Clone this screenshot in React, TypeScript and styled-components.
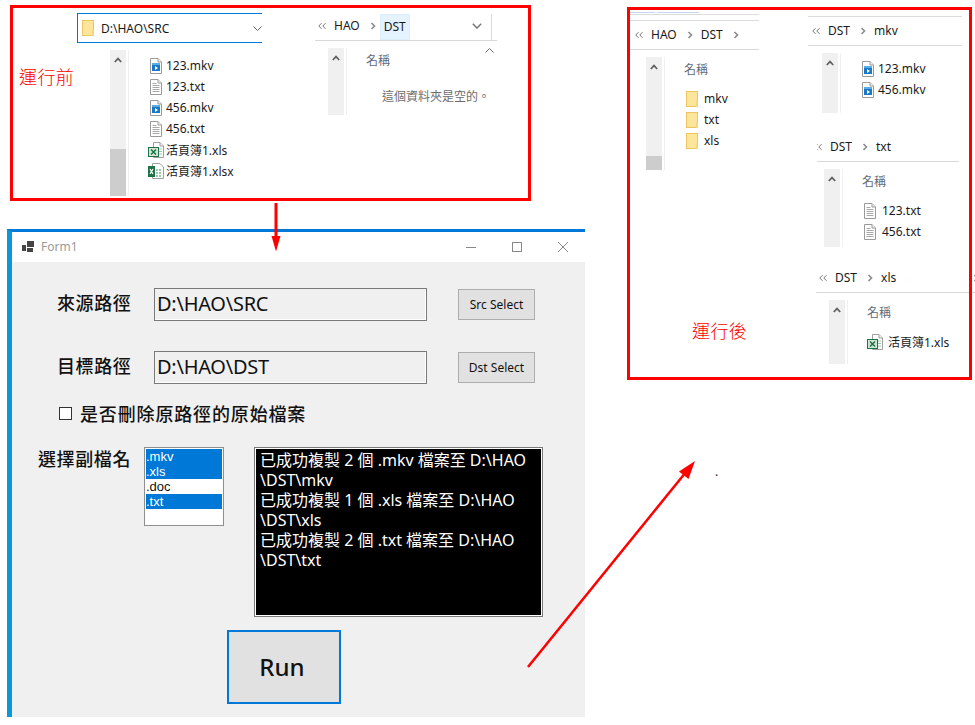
import React from "react";
import styled, { createGlobalStyle } from "styled-components";

const Global = createGlobalStyle`
  html, body { margin: 0; padding: 0; background: #fff; }
  body { font-family: "Noto Sans", "Noto Sans CJK TC", sans-serif; color: #1a1a1a; }
`;

const Canvas = styled.div`
  position: relative;
  width: 975px;
  height: 725px;
  overflow: hidden;
  background: #fff;
`;

const RedFrame = styled.div<{ $x: number; $y: number; $w: number; $h: number }>`
  position: absolute;
  left: ${(p) => p.$x}px;
  top: ${(p) => p.$y}px;
  width: ${(p) => p.$w}px;
  height: ${(p) => p.$h}px;
  box-sizing: border-box;
  border: 3px solid #fe0000;
  z-index: 3;
  pointer-events: none;
`;

const Note = styled.div<{ $x: number; $y: number }>`
  position: absolute;
  left: ${(p) => p.$x}px;
  top: ${(p) => p.$y}px;
  font-size: 18px;
  line-height: 24px;
  font-weight: 300;
  letter-spacing: 0.4px;
  color: #fe0000;
  white-space: nowrap;
`;

const Dot = styled.div`
  position: absolute;
  left: 715px;
  top: 464px;
  font-size: 12px;
  line-height: 16px;
  color: #222;
`;

const ArrowLayer = styled.svg`
  position: absolute;
  left: 0;
  top: 0;
  z-index: 4;
  pointer-events: none;
`;

const Explorer = styled.section<{ $x: number; $y: number; $w: number }>`
  position: absolute;
  left: ${(p) => p.$x}px;
  top: ${(p) => p.$y}px;
  width: ${(p) => p.$w}px;
`;

const TopRule = styled.div`
  height: 1px;
  background: #dcdcdc;
`;

const OldTabs = styled.div`
  position: absolute;
  left: 0;
  top: -8px;
  display: flex;
  flex-direction: column;
  width: 129px;
`;

const OldTabBits = styled.div`
  display: flex;
  gap: 2px;
  height: 1px;
  margin-bottom: 1px;
  & > i { display: block; height: 1px; background: #c6d6ee; }
  & > i:first-child { width: 25px; }
  & > i:last-child { width: 42px; }
`;

const Crumbs = styled.div<{ $pad: number; $clip?: boolean }>`
  display: flex;
  align-items: center;
  gap: 8px;
  height: 28px;
  padding-left: ${(p) => p.$pad}px;
  border-bottom: 1px solid #d9d9d9;
  font-size: 12px;
  color: #1a1a1a;
  white-space: nowrap;
  overflow: hidden;
  ${(p) => (p.$clip ? "& > svg:first-child { margin-left: -3px; }" : "")}
`;

const CrumbText = styled.span<{ $active?: boolean }>`
  display: flex;
  align-items: center;
  align-self: flex-end;
  height: 26px;
  line-height: 26px;
  ${(p) =>
    p.$active
      ? "background:#e5f3ff; padding:0 4px; margin:0 -4px; box-shadow: inset 0 0 0 1px #ddeefc;"
      : "margin-bottom:1px;"}
`;

const ChevWrap = styled.span`
  display: flex;
  margin-left: 2px;
`;

const CrumbEnd = styled.div<{ $left: number }>`
  display: flex;
  align-items: center;
  align-self: stretch;
  margin-left: ${(p) => p.$left}px;
`;

const CrumbTail = styled.span`
  display: flex;
  margin-left: auto;
  margin-right: -4px;
`;

const VRule = styled.div`
  width: 1px;
  height: 26px;
  align-self: flex-end;
  background: #d9d9d9;
  margin-left: 9px;
`;

const Combo = styled.div`
  display: flex;
  align-items: center;
  height: 28px;
  padding-left: 4px;
  border: 1px solid #0078d7;
  border-right: none;
  font-size: 12px;
  gap: 7px;
`;

const ComboValue = styled.span`
  flex: 1;
`;

const SortCaret = styled.svg`
  position: absolute;
  left: 170px;
  top: 36px;
`;

const Pane = styled.div<{ $indent: number }>`
  display: flex;
  margin-left: ${(p) => p.$indent}px;
  margin-top: 7px;
`;

const Scroll = styled.div<{ $h: number }>`
  display: flex;
  flex-direction: column;
  justify-content: space-between;
  align-items: center;
  width: 16px;
  height: ${(p) => p.$h}px;
  background: #f0f0f0;
`;

const ScrollArrow = styled.svg`
  margin-top: 7px;
  flex: none;
`;

const Thumb = styled.div<{ $h: number }>`
  width: 100%;
  height: ${(p) => p.$h}px;
  background: #cdcdcd;
`;

const PaneLine = styled.div`
  width: 1px;
  margin-left: 2px;
  background: #f0f0f0;
`;

const Column = styled.div`
  display: flex;
  flex-direction: column;
  padding-left: 19px;
  padding-top: 5px;
`;

const Header = styled.div`
  height: 24px;
  margin-top: -4px;
  margin-bottom: 6px;
  line-height: 24px;
  font-size: 12px;
  color: #5f6b7a;
  white-space: nowrap;
`;

const Empty = styled.div`
  margin-left: 16px;
  margin-top: 7px;
  line-height: 22px;
  font-size: 12px;
  color: #6d6d6d;
  white-space: nowrap;
`;

const Row = styled.div<{ $gap: number }>`
  display: flex;
  align-items: center;
  gap: ${(p) => p.$gap}px;
  height: 21px;
  font-size: 12px;
  color: #1a1a1a;
  white-space: nowrap;
`;

const IconBox = styled.span`
  display: flex;
  justify-content: center;
  width: 16px;
  flex: none;
`;

/* ---------- drawn icons ---------- */
const Chev = () => (
  <ChevWrap>
    <svg width="6" height="8" viewBox="0 0 6 8" fill="none">
      <path d="M1.500 1 4.500 4 1.500 7" stroke="#8a8a8a" strokeWidth="1.600" />
    </svg>
  </ChevWrap>
);
const Back = () => (
  <svg width="8" height="8" viewBox="0 0 8 8" fill="none">
    <path d="M3.500 1.200.8 4l2.700 2.800M7.500 1.200 4.800 4l2.700 2.800" stroke="#777" strokeWidth="1" />
  </svg>
);
const Down = () => (
  <svg width="10" height="6" viewBox="0 0 10 6" fill="none">
    <path d="M.8.8 5 5 9.200.8" stroke="#777" strokeWidth="1.500" />
  </svg>
);
const ThinDown = () => (
  <svg width="9" height="5" viewBox="0 0 9 5" fill="none">
    <path d="M.5.5 4.500 4.500 8.500.5" stroke="#666" strokeWidth="1" />
  </svg>
);
const Up = () => (
  <ScrollArrow width="8" height="6" viewBox="0 0 8 6" fill="none">
    <path d="M.8 5 4 1.600 7.200 5" stroke="#606060" strokeWidth="1.700" />
  </ScrollArrow>
);
const Page = ({ children }: { children?: React.ReactNode }) => (
  <svg width="12" height="16" viewBox="0 0 12 16">
    <path d="M.5.5h7.500l3.500 3.500v11.500H.5z" fill="#fff" stroke="#9a9a9a" />
    <path d="M8 .5V4h3.500" fill="#f2f2f2" stroke="#9a9a9a" />
    {children}
  </svg>
);
const TxtIcon = () => (
  <Page>
    <path d="M2.500 4.500h4M2.500 6.500h7M2.500 8.500h7M2.500 10.500h7M2.500 12.500h7" stroke="#a8a8a8" />
  </Page>
);
const MkvIcon = () => (
  <Page>
    <rect x="2" y="5" width="8" height="8" fill="#1a78c8" />
    <rect x="2" y="5" width="8" height="2" fill="#5aaee8" />
    <path d="M5 8 8 10 5 12z" fill="#fff" />
  </Page>
);
const XlsIcon = () => (
  <svg width="16" height="16" viewBox="0 0 16 16">
    <path d="M5.500.5h6.500l3.500 3.500v11.500H5.500z" fill="#fff" stroke="#a0a0a0" />
    <path d="M12 .5V4h3.500" fill="#f2f2f2" stroke="#a0a0a0" />
    <path d="M11 7h3M11 9.500h3M11 12h3" stroke="#9cc5ac" />
    <rect x=".5" y="5.500" width="10" height="9" fill="#cfe6d7" stroke="#1f7245" />
    <path d="M3 7.500 8 12.500M8 7.500 3 12.500" stroke="#1f7245" strokeWidth="1.500" />
  </svg>
);
const XlsxIcon = () => (
  <svg width="16" height="16" viewBox="0 0 16 16">
    <path d="M4.500.5h7.500l3.500 3.500v11.500h-11z" fill="#fff" stroke="#a0a0a0" />
    <path d="M8 6h2v2H8zM11 6h2v2h-2zM8 9h2v2H8zM11 9h2v2h-2zM8 12h2v2H8zM11 12h2v2h-2z" fill="#9cc5ac" />
    <rect x="0" y="3" width="7" height="11" fill="#1f7245" />
    <path d="M2 6l3 5M5 6l-3 5" stroke="#fff" strokeWidth="1.200" />
  </svg>
);
const FolderIcon = () => (
  <svg width="12" height="16" viewBox="0 0 12 16">
    <rect x=".5" y=".5" width="11" height="15" fill="#fde69c" stroke="#eac560" />
    <rect x="10" y="10" width="2" height="6" fill="#f5d67c" />
  </svg>
);

type Kind = "mkv" | "txt" | "xls" | "xlsx" | "folder";
const icons: Record<Kind, React.FC> = {
  mkv: MkvIcon,
  txt: TxtIcon,
  xls: XlsIcon,
  xlsx: XlsxIcon,
  folder: FolderIcon,
};

const FileRow = ({ kind, name, gap }: { kind: Kind; name: string; gap: number }) => {
  const I = icons[kind];
  return (
    <Row $gap={gap}>
      <IconBox>
        <I />
      </IconBox>
      {name}
    </Row>
  );
};

const Trail = ({
  parts,
  pad,
  clip,
  trailing,
  tail,
}: {
  parts: string[];
  pad: number;
  clip?: boolean;
  trailing?: boolean;
  tail?: boolean;
}) => (
  <Crumbs $pad={pad} $clip={clip}>
    <Back />
    {parts.map((p, i) => (
      <React.Fragment key={p}>
        {i > 0 && <Chev />}
        <CrumbText>{p}</CrumbText>
      </React.Fragment>
    ))}
    {trailing && <Chev />}
    {tail && (
      <CrumbTail>
        <Chev />
      </CrumbTail>
    )}
  </Crumbs>
);

/* ---------- the form ---------- */
const Form = styled.section`
  position: absolute;
  left: 7px;
  top: 229px;
  width: 578px;
  height: 488px;
  box-sizing: border-box;
  display: flex;
  flex-direction: column;
  border-top: 3px solid #0078d7;
  border-left: 5px solid #0a98da;
  background: #f0f0f0;
`;

const TitleBar = styled.header`
  display: flex;
  align-items: center;
  flex: none;
  height: 30px;
  padding-left: 10px;
  background: #fff;
`;

const TitleText = styled.span`
  margin-left: 7px;
  margin-bottom: 1px;
  font-size: 12px;
  color: #9a9a9a;
`;

const WinButtons = styled.div`
  display: flex;
  align-items: center;
  gap: 36px;
  margin-left: auto;
  margin-right: 17px;
  margin-top: -1px;
`;

const FormBody = styled.div`
  display: flex;
  flex-direction: column;
  padding: 26px 0 0 45px;
`;

const PathRow = styled.div`
  display: flex;
  align-items: center;
  height: 33px;
  margin-bottom: 30px;
`;

const FieldLabel = styled.label`
  width: 97px;
  flex: none;
  padding-bottom: 3px;
  font-size: 18px;
  font-weight: 500;
  letter-spacing: 0.6px;
  line-height: 24px;
  color: #111;
  white-space: nowrap;
`;

const PathBox = styled.div`
  display: flex;
  align-items: center;
  width: 273px;
  height: 33px;
  box-sizing: border-box;
  padding: 0 0 3px 2px;
  border: 1px solid #7a7a7a;
  box-shadow: inset -1px -1px 0 #fff;
  font-size: 20px;
  letter-spacing: -0.25px;
  color: #111;
`;

const SelectButton = styled.button`
  width: 77px;
  height: 31px;
  margin-left: 31px;
  padding: 0;
  box-sizing: border-box;
  border: 1px solid #adadad;
  background: #e1e1e1;
  font-family: inherit;
  font-size: 12px;
  color: #111;
`;

const CheckRow = styled.div`
  display: flex;
  align-items: center;
  gap: 8px;
  height: 20px;
  margin: -11px 0 0 2px;
  font-size: 18px;
  font-weight: 500;
  letter-spacing: 0.85px;
  color: #111;
  white-space: nowrap;
`;

const CheckBox = styled.span`
  width: 13px;
  height: 13px;
  box-sizing: border-box;
  border: 1px solid #333;
  background: #fff;
  flex: none;
`;

const LowerRow = styled.div`
  display: grid;
  grid-template-columns: 93px 80px 289px;
  column-gap: 0;
  margin: 24px 0 0 -19px;
`;

const LowerLabel = styled(FieldLabel)`
  width: auto;
  padding-bottom: 0;
`;

const ListBox = styled.div`
  margin-left: 13px;
  width: 80px;
  height: 79px;
  box-sizing: border-box;
  padding: 1px;
  border: 1px solid #8e8f8f;
  background: #fff;
  display: flex;
  flex-direction: column;
`;

const ListItem = styled.div<{ $on?: boolean }>`
  height: 15px;
  line-height: 15px;
  font-family: "Liberation Sans", sans-serif;
  font-size: 13px;
  background: ${(p) => (p.$on ? "#0078d7" : "#fff")};
  color: ${(p) => (p.$on ? "#fff" : "#111")};
`;

const Output = styled.div`
  margin-left: 43px;
  width: 289px;
  height: 170px;
  box-sizing: border-box;
  padding: 2px 0 0 5px;
  border: 1px solid #7a7a7a;
  box-shadow: inset 0 0 0 1px #fff;
  background: #000;
  color: #fff;
  font-size: 16px;
  line-height: 20px;
  white-space: nowrap;
`;

const RunRow = styled.div`
  display: flex;
`;

const RunButton = styled.button`
  width: 114px;
  height: 74px;
  margin: 13px 0 0 170px;
  padding: 0 4px 2px 0;
  box-sizing: border-box;
  border: 2px solid #0078d7;
  background: #e1e1e1;
  font-family: inherit;
  font-size: 24px;
  font-weight: 500;
  color: #111;
`;

export default function App() {
  return (
    <Canvas>
      <Global />

      {/* source folder, before */}
      <Explorer $x={77} $y={13} $w={185}>
        <Combo>
          <FolderIcon />
          <ComboValue>D:\HAO\SRC</ComboValue>
          <ThinDown />
        </Combo>
        <Pane $indent={33}>
          <Scroll $h={146}>
            <Up />
            <Thumb $h={47} />
          </Scroll>
          <PaneLine />
          <Column>
            <FileRow kind="mkv" name="123.mkv" gap={2} />
            <FileRow kind="txt" name="123.txt" gap={2} />
            <FileRow kind="mkv" name="456.mkv" gap={2} />
            <FileRow kind="txt" name="456.txt" gap={2} />
            <FileRow kind="xls" name="活頁簿1.xls" gap={2} />
            <FileRow kind="xlsx" name="活頁簿1.xlsx" gap={2} />
          </Column>
        </Pane>
      </Explorer>

      {/* destination folder, before */}
      <Explorer $x={315} $y={12} $w={182}>
        <Crumbs $pad={3}>
          <Back />
          <CrumbText>HAO</CrumbText>
          <Chev />
          <CrumbText $active>DST</CrumbText>
          <CrumbEnd $left={58}>
            <Down />
            <VRule />
          </CrumbEnd>
        </Crumbs>
        <SortCaret width="9" height="5" viewBox="0 0 9 5" fill="none">
          <path d="M.5 4.500 4.500.5 8.500 4.500" stroke="#666" strokeWidth="1" />
        </SortCaret>
        <Pane $indent={13}>
          <Scroll $h={67}>
            <Up />
          </Scroll>
          <PaneLine />
          <Column>
            <Header>名稱</Header>
            <Empty>這個資料夾是空的。</Empty>
          </Column>
        </Pane>
      </Explorer>

      <Note $x={19} $y={65}>運行前</Note>
      <RedFrame $x={10} $y={5} $w={521} $h={196} />

      {/* the form */}
      <Form>
        <TitleBar>
          <svg width="12" height="12" viewBox="0 0 12 12">
            <path d="M0 4h4v6H0zM5 0h7v6H5zM5 7h6v4H5z" fill="#444" />
          </svg>
          <TitleText>Form1</TitleText>
          <WinButtons>
            <svg width="10" height="10" viewBox="0 0 10 10">
              <path d="M0 5.500h10" stroke="#888" />
            </svg>
            <svg width="10" height="10" viewBox="0 0 10 10">
              <rect x=".5" y=".5" width="9" height="9" fill="none" stroke="#888" />
            </svg>
            <svg width="10" height="10" viewBox="0 0 10 10">
              <path d="M0 0l10 10M10 0 0 10" stroke="#888" />
            </svg>
          </WinButtons>
        </TitleBar>
        <FormBody>
          <PathRow>
            <FieldLabel>來源路徑</FieldLabel>
            <PathBox>D:\HAO\SRC</PathBox>
            <SelectButton>Src Select</SelectButton>
          </PathRow>
          <PathRow>
            <FieldLabel>目標路徑</FieldLabel>
            <PathBox>D:\HAO\DST</PathBox>
            <SelectButton>Dst Select</SelectButton>
          </PathRow>
          <CheckRow>
            <CheckBox />
            是否刪除原路徑的原始檔案
          </CheckRow>
          <LowerRow>
            <LowerLabel>選擇副檔名</LowerLabel>
            <ListBox>
              <ListItem $on>.mkv</ListItem>
              <ListItem $on>.xls</ListItem>
              <ListItem>.doc</ListItem>
              <ListItem $on>.txt</ListItem>
            </ListBox>
            <Output>
              <div>已成功複製 2 個 .mkv 檔案至 D:\HAO</div>
              <div>\DST\mkv</div>
              <div>已成功複製 1 個 .xls 檔案至 D:\HAO</div>
              <div>\DST\xls</div>
              <div>已成功複製 2 個 .txt 檔案至 D:\HAO</div>
              <div>\DST\txt</div>
            </Output>
          </LowerRow>
          <RunRow>
            <RunButton>Run</RunButton>
          </RunRow>
        </FormBody>
      </Form>

      {/* after */}
      <Explorer $x={630} $y={20} $w={129}>
        <OldTabs>
          <OldTabBits>
            <i />
            <i />
          </OldTabBits>
          <TopRule />
        </OldTabs>
        <TopRule />
        <Trail parts={["HAO", "DST"]} pad={5} trailing />
        <Pane $indent={16}>
          <Scroll $h={113}>
            <Up />
            <Thumb $h={14} />
          </Scroll>
          <PaneLine />
          <Column>
            <Header>名稱</Header>
            <FileRow kind="folder" name="mkv" gap={4} />
            <FileRow kind="folder" name="txt" gap={4} />
            <FileRow kind="folder" name="xls" gap={4} />
          </Column>
        </Pane>
      </Explorer>

      <Explorer $x={808} $y={16} $w={154}>
        <TopRule />
        <Trail parts={["DST", "mkv"]} pad={4} />
        <Pane $indent={14}>
          <Scroll $h={60}>
            <Up />
          </Scroll>
          <PaneLine />
          <Column>
            <FileRow kind="mkv" name="123.mkv" gap={2} />
            <FileRow kind="mkv" name="456.mkv" gap={2} />
          </Column>
        </Pane>
      </Explorer>

      <Explorer $x={817} $y={133} $w={142}>
        <Trail parts={["DST", "txt"]} pad={0} clip />
        <Pane $indent={7}>
          <Scroll $h={78}>
            <Up />
          </Scroll>
          <PaneLine />
          <Column>
            <Header>名稱</Header>
            <FileRow kind="txt" name="123.txt" gap={4} />
            <FileRow kind="txt" name="456.txt" gap={4} />
          </Column>
        </Pane>
      </Explorer>

      <Explorer $x={816} $y={264} $w={159}>
        <Trail parts={["DST", "xls"]} pad={3} tail />
        <Pane $indent={13}>
          <Scroll $h={64}>
            <Up />
          </Scroll>
          <PaneLine />
          <Column>
            <Header>名稱</Header>
            <FileRow kind="xls" name="活頁簿1.xls" gap={5} />
          </Column>
        </Pane>
      </Explorer>

      <Note $x={692} $y={319}>運行後</Note>
      <RedFrame $x={627} $y={7} $w={345} $h={373} />
      <Dot>.</Dot>

      <ArrowLayer width="975" height="725" viewBox="0 0 975 725" fill="none">
        <path d="M276 203V238" stroke="#fe0000" strokeWidth="3" />
        <path d="M271.500 236h9L276 251.500z" fill="#fe0000" />
        <path d="M528 667 686 472" stroke="#fe0000" strokeWidth="2.500" />
        <path d="M695 461 688.500 479 679 471.500z" fill="#fe0000" />
      </ArrowLayer>
    </Canvas>
  );
}
